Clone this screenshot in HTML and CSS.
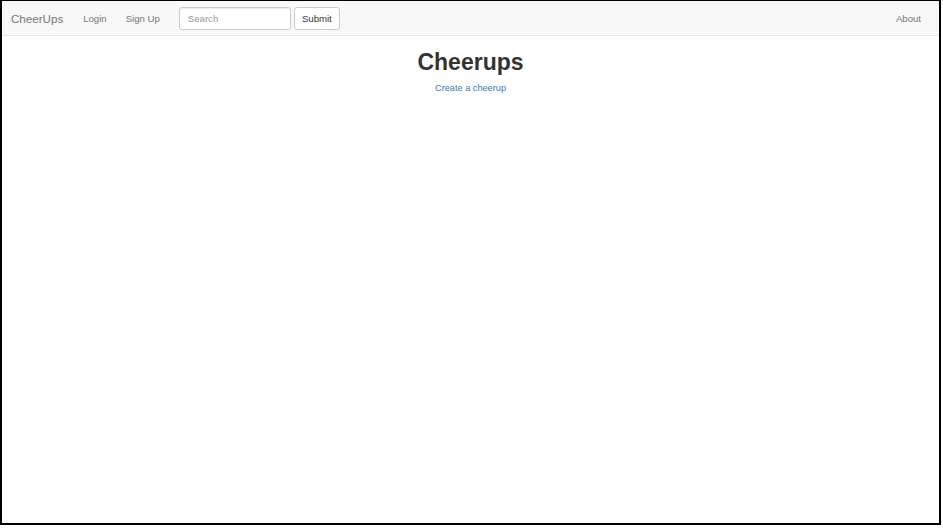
FILE: index.html
```html
<!DOCTYPE html>
<html>
<head>
<meta charset="utf-8">
<link rel="stylesheet" href="styles.css">
</head>
<body>
<div class="frame">
  <nav class="navbar">
    <a class="brand" href="#">CheerUps</a>
    <a class="nav-link" href="#">Login</a>
    <a class="nav-link" href="#">Sign Up</a>
    <form class="search">
      <input class="search-input" type="text" placeholder="Search">
      <button class="btn" type="button">Submit</button>
    </form>
    <a class="nav-link about" href="#">About</a>
  </nav>
  <main class="content">
    <h1 class="title">Cheerups</h1>
    <a class="create" href="#">Create a cheerup</a>
  </main>
</div>
</body>
</html>
```
FILE: styles.css
```css
html, body {
  margin: 0;
  padding: 0;
  background: #fff;
}
body {
  font-family: "Liberation Sans", Arial, sans-serif;
  width: 943px;
  height: 528px;
  overflow: hidden;
}
.frame {
  box-sizing: border-box;
  width: 941px;
  height: 525px;
  border: 2px solid #000;
  border-top-width: 1px;
  display: flex;
  flex-direction: column;
}
.navbar {
  display: flex;
  align-items: center;
  background: #f8f8f8;
  border-bottom: 1px solid #e7e7e7;
  padding: 1px 18px 0 9px;
  box-sizing: border-box;
  height: 35px;
}
.navbar a {
  text-decoration: none;
}
.brand {
  font-size: 11.6px;
  color: #777;
  margin-right: 20px;
}
.nav-link {
  font-size: 9.6px;
  color: #777;
  margin-right: 19px;
}
.search {
  display: flex;
  gap: 3px;
  margin: 0;
}
.search-input {
  box-sizing: border-box;
  width: 112px;
  height: 23px;
  border: 1px solid #ccc;
  border-radius: 3px;
  padding: 0 8px;
  font-family: "Liberation Sans", Arial, sans-serif;
  font-size: 9.6px;
  color: #555;
  background: #fff;
  box-shadow: inset 0 1px 1px rgba(0,0,0,0.075);
}
.search-input::placeholder {
  color: #999;
}
.btn {
  box-sizing: border-box;
  height: 23px;
  width: 46px;
  border: 1px solid #ccc;
  border-radius: 3px;
  background: #fff;
  font-family: "Liberation Sans", Arial, sans-serif;
  font-size: 9.6px;
  font-weight: 400;
  color: #333;
  padding: 0;
}
.about {
  margin-left: auto;
  margin-right: 0;
}
.content {
  display: flex;
  flex-direction: column;
  align-items: center;
  padding-top: 14px;
}
.title {
  margin: 0;
  font-size: 23px;
  font-weight: 700;
  color: #333;
  line-height: 1.1;
}
.create {
  margin-top: 8px;
  font-size: 9.2px;
  color: #337ab7;
  text-decoration: none;
}
```
